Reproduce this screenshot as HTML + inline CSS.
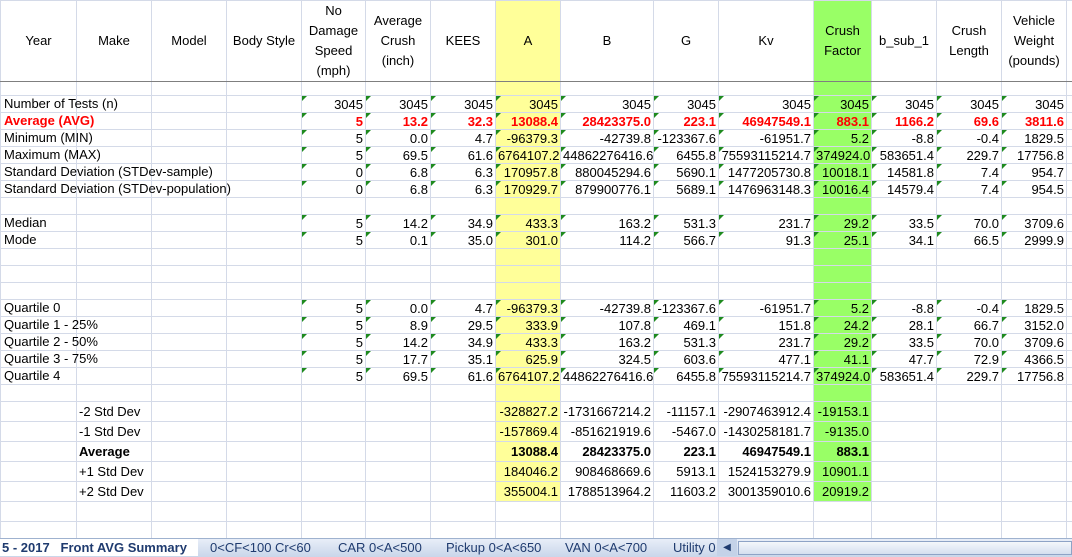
<!DOCTYPE html>
<html><head><meta charset="utf-8">
<style>
body{margin:0;width:1072px;height:556px;overflow:hidden;background:#fff;font-family:"Liberation Sans",Arial,sans-serif;font-size:13px;color:#000;position:relative}
table{border-collapse:collapse;table-layout:fixed;position:absolute;left:0;top:0;width:1072px}
td{border:1px solid #d4dae8;padding:0 2px 0 2px;white-space:nowrap;text-align:right;overflow:visible;position:relative;line-height:15px}
td.l{text-align:left}
tr.h td{text-align:center;line-height:20px;height:79px;border-bottom:1px solid #7f7f7f;padding:0}
tr.b td{height:13px}
tr.r td{height:16px}
tr.s td{height:19px}
.y{background:#ffff99}
.g{background:#99ff66}
.red td{color:#ff0000;font-weight:bold}
.bo td{font-weight:bold}
.t::before{content:"";position:absolute;left:0;top:0;border-top:5px solid #1e8a1e;border-right:5px solid transparent}
.ov{position:absolute;left:3px;top:0}
#tabs{position:absolute;left:0;top:538px;width:1072px;height:18px;background:linear-gradient(#e8eef8,#c9d6ea);border-top:1px solid #9fb2cf;font-size:13px;color:#1f3b6f}
.tab{position:absolute;top:0;height:17px;line-height:17px;white-space:nowrap}
</style></head><body>
<table>
<colgroup><col style="width:76px"><col style="width:75px"><col style="width:75px"><col style="width:75px"><col style="width:64px"><col style="width:65px"><col style="width:65px"><col style="width:65px"><col style="width:93px"><col style="width:65px"><col style="width:95px"><col style="width:58px"><col style="width:65px"><col style="width:65px"><col style="width:65px"><col style="width:6px"></colgroup>
<tr class="h"><td>Year</td><td>Make</td><td>Model</td><td>Body Style</td><td>No<br>Damage<br>Speed<br>(mph)</td><td>Average<br>Crush<br>(inch)</td><td>KEES</td><td class="y">A</td><td>B</td><td>G</td><td>Kv</td><td class="g">Crush<br>Factor</td><td>b_sub_1</td><td>Crush<br>Length</td><td>Vehicle<br>Weight<br>(pounds)</td><td></td></tr>
<tr class="b"><td></td><td></td><td></td><td></td><td></td><td></td><td></td><td class="y"></td><td></td><td></td><td></td><td class="g"></td><td></td><td></td><td></td><td></td></tr>
<tr class="r"><td class="l"><span class="ov">Number of Tests (n)</span></td><td></td><td></td><td></td><td class="t">3045</td><td class="t">3045</td><td class="t">3045</td><td class="y t">3045</td><td class="t">3045</td><td class="t">3045</td><td class="t">3045</td><td class="g t">3045</td><td class="t">3045</td><td class="t">3045</td><td class="t">3045</td><td></td></tr>
<tr class="r red"><td class="l"><span class="ov">Average (AVG)</span></td><td></td><td></td><td></td><td class="t">5</td><td class="t">13.2</td><td class="t">32.3</td><td class="y t">13088.4</td><td class="t">28423375.0</td><td class="t">223.1</td><td class="t">46947549.1</td><td class="g t">883.1</td><td class="t">1166.2</td><td class="t">69.6</td><td class="t">3811.6</td><td></td></tr>
<tr class="r"><td class="l"><span class="ov">Minimum (MIN)</span></td><td></td><td></td><td></td><td class="t">5</td><td class="t">0.0</td><td class="t">4.7</td><td class="y t">-96379.3</td><td class="t">-42739.8</td><td class="t">-123367.6</td><td class="t">-61951.7</td><td class="g t">5.2</td><td class="t">-8.8</td><td class="t">-0.4</td><td class="t">1829.5</td><td></td></tr>
<tr class="r"><td class="l"><span class="ov">Maximum (MAX)</span></td><td></td><td></td><td></td><td class="t">5</td><td class="t">69.5</td><td class="t">61.6</td><td class="y t">6764107.2</td><td class="t">44862276416.6</td><td class="t">6455.8</td><td class="t">75593115214.7</td><td class="g t">374924.0</td><td class="t">583651.4</td><td class="t">229.7</td><td class="t">17756.8</td><td></td></tr>
<tr class="r"><td class="l"><span class="ov">Standard Deviation (STDev-sample)</span></td><td></td><td></td><td></td><td class="t">0</td><td class="t">6.8</td><td class="t">6.3</td><td class="y t">170957.8</td><td class="t">880045294.6</td><td class="t">5690.1</td><td class="t">1477205730.8</td><td class="g t">10018.1</td><td class="t">14581.8</td><td class="t">7.4</td><td class="t">954.7</td><td></td></tr>
<tr class="r"><td class="l"><span class="ov">Standard Deviation (STDev-population)</span></td><td></td><td></td><td></td><td class="t">0</td><td class="t">6.8</td><td class="t">6.3</td><td class="y t">170929.7</td><td class="t">879900776.1</td><td class="t">5689.1</td><td class="t">1476963148.3</td><td class="g t">10016.4</td><td class="t">14579.4</td><td class="t">7.4</td><td class="t">954.5</td><td></td></tr>
<tr class="r"><td></td><td></td><td></td><td></td><td></td><td></td><td></td><td class="y"></td><td></td><td></td><td></td><td class="g"></td><td></td><td></td><td></td><td></td></tr>
<tr class="r"><td class="l"><span class="ov">Median</span></td><td></td><td></td><td></td><td class="t">5</td><td class="t">14.2</td><td class="t">34.9</td><td class="y t">433.3</td><td class="t">163.2</td><td class="t">531.3</td><td class="t">231.7</td><td class="g t">29.2</td><td class="t">33.5</td><td class="t">70.0</td><td class="t">3709.6</td><td></td></tr>
<tr class="r"><td class="l"><span class="ov">Mode</span></td><td></td><td></td><td></td><td class="t">5</td><td class="t">0.1</td><td class="t">35.0</td><td class="y t">301.0</td><td class="t">114.2</td><td class="t">566.7</td><td class="t">91.3</td><td class="g t">25.1</td><td class="t">34.1</td><td class="t">66.5</td><td class="t">2999.9</td><td></td></tr>
<tr class="r"><td></td><td></td><td></td><td></td><td></td><td></td><td></td><td class="y"></td><td></td><td></td><td></td><td class="g"></td><td></td><td></td><td></td><td></td></tr>
<tr class="r"><td></td><td></td><td></td><td></td><td></td><td></td><td></td><td class="y"></td><td></td><td></td><td></td><td class="g"></td><td></td><td></td><td></td><td></td></tr>
<tr class="r"><td></td><td></td><td></td><td></td><td></td><td></td><td></td><td class="y"></td><td></td><td></td><td></td><td class="g"></td><td></td><td></td><td></td><td></td></tr>
<tr class="r"><td class="l"><span class="ov">Quartile 0</span></td><td></td><td></td><td></td><td class="t">5</td><td class="t">0.0</td><td class="t">4.7</td><td class="y t">-96379.3</td><td class="t">-42739.8</td><td class="t">-123367.6</td><td class="t">-61951.7</td><td class="g t">5.2</td><td class="t">-8.8</td><td class="t">-0.4</td><td class="t">1829.5</td><td></td></tr>
<tr class="r"><td class="l"><span class="ov">Quartile 1 - 25%</span></td><td></td><td></td><td></td><td class="t">5</td><td class="t">8.9</td><td class="t">29.5</td><td class="y t">333.9</td><td class="t">107.8</td><td class="t">469.1</td><td class="t">151.8</td><td class="g t">24.2</td><td class="t">28.1</td><td class="t">66.7</td><td class="t">3152.0</td><td></td></tr>
<tr class="r"><td class="l"><span class="ov">Quartile 2 - 50%</span></td><td></td><td></td><td></td><td class="t">5</td><td class="t">14.2</td><td class="t">34.9</td><td class="y t">433.3</td><td class="t">163.2</td><td class="t">531.3</td><td class="t">231.7</td><td class="g t">29.2</td><td class="t">33.5</td><td class="t">70.0</td><td class="t">3709.6</td><td></td></tr>
<tr class="r"><td class="l"><span class="ov">Quartile 3 - 75%</span></td><td></td><td></td><td></td><td class="t">5</td><td class="t">17.7</td><td class="t">35.1</td><td class="y t">625.9</td><td class="t">324.5</td><td class="t">603.6</td><td class="t">477.1</td><td class="g t">41.1</td><td class="t">47.7</td><td class="t">72.9</td><td class="t">4366.5</td><td></td></tr>
<tr class="r"><td class="l"><span class="ov">Quartile 4</span></td><td></td><td></td><td></td><td class="t">5</td><td class="t">69.5</td><td class="t">61.6</td><td class="y t">6764107.2</td><td class="t">44862276416.6</td><td class="t">6455.8</td><td class="t">75593115214.7</td><td class="g t">374924.0</td><td class="t">583651.4</td><td class="t">229.7</td><td class="t">17756.8</td><td></td></tr>
<tr class="r"><td></td><td></td><td></td><td></td><td></td><td></td><td></td><td class="y"></td><td></td><td></td><td></td><td class="g"></td><td></td><td></td><td></td><td></td></tr>
<tr class="s"><td></td><td class="l">-2 Std Dev</td><td></td><td></td><td></td><td></td><td></td><td class="y">-328827.2</td><td>-1731667214.2</td><td>-11157.1</td><td>-2907463912.4</td><td class="g">-19153.1</td><td></td><td></td><td></td><td></td></tr>
<tr class="s"><td></td><td class="l">-1 Std Dev</td><td></td><td></td><td></td><td></td><td></td><td class="y">-157869.4</td><td>-851621919.6</td><td>-5467.0</td><td>-1430258181.7</td><td class="g">-9135.0</td><td></td><td></td><td></td><td></td></tr>
<tr class="s bo"><td></td><td class="l">Average</td><td></td><td></td><td></td><td></td><td></td><td class="y">13088.4</td><td>28423375.0</td><td>223.1</td><td>46947549.1</td><td class="g">883.1</td><td></td><td></td><td></td><td></td></tr>
<tr class="s"><td></td><td class="l">+1 Std Dev</td><td></td><td></td><td></td><td></td><td></td><td class="y">184046.2</td><td>908468669.6</td><td>5913.1</td><td>1524153279.9</td><td class="g">10901.1</td><td></td><td></td><td></td><td></td></tr>
<tr class="s"><td></td><td class="l">+2 Std Dev</td><td></td><td></td><td></td><td></td><td></td><td class="y">355004.1</td><td>1788513964.2</td><td>11603.2</td><td>3001359010.6</td><td class="g">20919.2</td><td></td><td></td><td></td><td></td></tr>
<tr class="s"><td></td><td></td><td></td><td></td><td></td><td></td><td></td><td></td><td></td><td></td><td></td><td></td><td></td><td></td><td></td><td></td></tr>
<tr class="s"><td></td><td></td><td></td><td></td><td></td><td></td><td></td><td></td><td></td><td></td><td></td><td></td><td></td><td></td><td></td><td></td></tr>
</table>
<div id="tabs">
<div class="tab" style="left:0;width:196px;background:#fff;font-weight:bold;padding-left:2px">5 - 2017&nbsp;&nbsp; Front AVG Summary</div>
<div class="tab" style="left:210px">0&lt;CF&lt;100 Cr&lt;60</div>
<div class="tab" style="left:338px">CAR 0&lt;A&lt;500</div>
<div class="tab" style="left:446px">Pickup 0&lt;A&lt;650</div>
<div class="tab" style="left:565px">VAN 0&lt;A&lt;700</div>
<div class="tab" style="left:673px;width:44px;overflow:hidden">Utility 0</div>
<div class="tab" style="left:717px;width:20px;background:#c4d2e8;text-align:center;font-size:10px">&#9664;</div>
<div class="tab" style="left:738px;width:334px;top:2px;height:14px;background:linear-gradient(#f4f7fb,#d5dff0);border:1px solid #8ea3c6;box-sizing:border-box"></div>
</div>
</body></html>
